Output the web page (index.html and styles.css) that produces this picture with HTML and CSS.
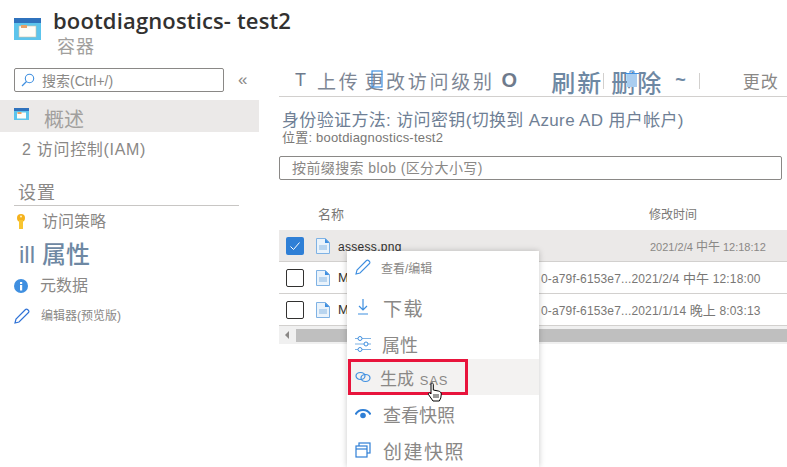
FILE: index.html
```html
<!DOCTYPE html>
<html lang="zh-CN">
<head>
    <meta charset="UTF-8">
    <meta name="viewport" content="width=device-width, initial-scale=1.0">
    <title>bootdiagnostics-test2</title>
    <link rel="stylesheet" href="styles.css">
</head>
<body>
    <header class="page-head">
        <svg class="head-icon" viewBox="0 0 27 22">
            <rect width="27" height="22" fill="#5cc4ec"/>
            <rect width="27" height="5" fill="#2f72bd"/>
            <rect x="5" y="8" width="17" height="11" fill="#fdfdf8" stroke="#c9c3a8" stroke-width=".6"/>
            <rect x="7" y="7" width="6" height="3" fill="#e8a268"/>
        </svg>
        <div>
            <h1>bootdiagnostics- test2</h1>
            <div class="subtitle">容器</div>
        </div>
    </header>

    <div class="main">
        <nav class="side">
            <div class="side-search-row">
                <div class="side-search">
                    <svg class="search-icon" viewBox="0 0 14 14">
                        <circle cx="8.5" cy="5.5" r="4.2" fill="none" stroke="#3f8fe0" stroke-width="1.1"/>
                        <path d="M5.5 8.5 1 13" stroke="#3f8fe0" stroke-width="1.3"/>
                    </svg>
                    <span>搜索(Ctrl+/)</span>
                </div>
                <span class="collapse">«</span>
            </div>
            <div class="side-overview">
                <svg class="overview-icon" viewBox="0 0 15 12">
                    <rect width="15" height="12" fill="#5cc4ec"/>
                    <rect width="15" height="3" fill="#2f72bd"/>
                    <rect x="3" y="4.5" width="9" height="6" fill="#fdfdf8"/>
                    <rect x="3.5" y="4" width="4" height="2" fill="#e8a268"/>
                </svg>
                <span>概述</span>
            </div>
            <div class="side-iam">2 访问控制(IAM)</div>
            <div class="side-section">设置</div>
            <div class="side-item side-policy">
                <svg class="key-icon" viewBox="0 0 10 16">
                    <circle cx="5" cy="4" r="4" fill="#f5b21d"/>
                    <rect x="3" y="6" width="4" height="9" fill="#f8c530"/>
                    <circle cx="5" cy="2.5" r="1" fill="#fff3c4"/>
                </svg>
                <span>访问策略</span>
            </div>
            <div class="side-props"><span class="props-ill">ill</span>属性</div>
            <div class="side-item side-meta">
                <svg class="info-icon" viewBox="0 0 14 14">
                    <circle cx="7" cy="7" r="7" fill="#3f8fe0"/>
                    <rect x="6" y="6" width="2.2" height="5.5" fill="#fff"/>
                    <rect x="6" y="3" width="2.2" height="2" fill="#fff"/>
                </svg>
                <span>元数据</span>
            </div>
            <div class="side-item side-editor">
                <svg class="pencil-icon" viewBox="0 0 16 16">
                    <path d="M1 15l1-4L11.500 1.500a1.400 1.400 0 0 1 2 0l1 1a1.400 1.400 0 0 1 0 2L5 14z" fill="none" stroke="#2f72d6" stroke-width="1.200"/>
                </svg>
                <span>编辑器(预览版)</span>
            </div>
        </nav>

        <section class="content">
            <div class="toolbar">
                <span class="tool-t">T</span>
                <span class="tool tool-upload">上传</span>
                <span class="tool tool-access">更改访问级别</span>
                <span class="tool-circle">O</span>
                <span class="tool-big tool-refresh">刷新</span>
                <span class="tool-sep"></span>
                <span class="tool-big tool-delete">删除</span>
                <span class="tool-tilde">~</span>
                <span class="tool-sep tool-sep-2"></span>
                <span class="tool-change">更改</span>
                <svg class="overlay-icon overlay-square" viewBox="0 0 12 18">
                    <rect x="1" y="1" width="10" height="16" fill="none" stroke="#3f8fe0" stroke-width="1.200"/>
                </svg>
                <svg class="overlay-icon overlay-trash" viewBox="0 0 14 18">
                    <rect x="2" y="4" width="10" height="13" fill="#a9cdf0"/>
                    <path d="M0 3.500h14M5 3V1h4v2" fill="none" stroke="#3f8fe0"/>
                </svg>
            </div>

            <div class="auth">身份验证方法: 访问密钥(切换到 Azure AD 用户帐户)</div>
            <div class="location">位置: bootdiagnostics-test2</div>
            <div class="blob-search">按前缀搜索 blob (区分大小写)</div>

            <div class="table-head">
                <span class="col-name">名称</span>
                <span class="col-time">修改时间</span>
            </div>
            <div class="row row-selected">
                <span class="check check-on">
                    <svg viewBox="0 0 18 18"><path d="M4.500 9.500l3 3 6-7" fill="none" stroke="#fff" stroke-width="1"/></svg>
                </span>
                <svg class="file-icon" viewBox="0 0 14 16"><path d="M.5.500h9l4 4v11H.5z" fill="#eaf3fb" stroke="#7fb2e4"/><path d="M9 .500v4.500h4.500z" fill="#3f8fe0"/><rect x="3" y="7" width="8" height="5" fill="#b9d5ef"/></svg>
                <span class="file-name file-name-cut">assess.png</span>
                <span class="row-time">2021/2/4 <span class="cjk">中午</span> 12:18:12</span>
            </div>
            <div class="row">
                <span class="check"></span>
                <svg class="file-icon" viewBox="0 0 14 16"><path d="M.5.500h9l4 4v11H.5z" fill="#eaf3fb" stroke="#7fb2e4"/><path d="M9 .500v4.500h4.500z" fill="#3f8fe0"/><rect x="3" y="7" width="8" height="5" fill="#b9d5ef"/></svg>
                <span class="file-name">M</span>
                <span class="row-guid">0-a79f-6153e7...2021/2/4 <span class="cjk">中午</span> 12:18:00</span>
            </div>
            <div class="row">
                <span class="check"></span>
                <svg class="file-icon" viewBox="0 0 14 16"><path d="M.5.500h9l4 4v11H.5z" fill="#eaf3fb" stroke="#7fb2e4"/><path d="M9 .500v4.500h4.500z" fill="#3f8fe0"/><rect x="3" y="7" width="8" height="5" fill="#b9d5ef"/></svg>
                <span class="file-name">M</span>
                <span class="row-guid">0-a79f-6153e7...2021/1/14 <span class="cjk">晚上</span> 8:03:13</span>
            </div>
            <div class="scrollbar">
                <span class="scroll-arrow"></span>
                <span class="scroll-thumb"></span>
            </div>
        </section>
    </div>

    <div class="menu">
        <div class="menu-item menu-edit">
            <svg class="menu-icon" viewBox="0 0 16 16"><path d="M1 15l1-4L11.500 1.500a1.400 1.400 0 0 1 2 0l1 1a1.400 1.400 0 0 1 0 2L5 14z" fill="none" stroke="#3f8fe0" stroke-width="1.100"/></svg>
            <span>查看/编辑</span>
        </div>
        <div class="menu-item menu-download">
            <svg class="menu-icon" viewBox="0 0 16 16"><path d="M8 0v10M4 7l4 4 4-4M3 15h10" fill="none" stroke="#3f8fe0" stroke-width="1.200"/></svg>
            <span>下载</span>
        </div>
        <div class="menu-item menu-props">
            <svg class="menu-icon" viewBox="0 0 16 16"><path d="M0 2.500h16M0 8h16M0 13.500h16" stroke="#7fb2e4" stroke-width="1.200"/><circle cx="5" cy="2.500" r="2" fill="#fff" stroke="#3f8fe0"/><circle cx="11" cy="8" r="2" fill="#fff" stroke="#3f8fe0"/><circle cx="5" cy="13.500" r="2" fill="#fff" stroke="#3f8fe0"/></svg>
            <span>属性</span>
        </div>
        <div class="menu-item menu-sas">
            <div class="sas-box">
                <svg class="menu-icon" viewBox="0 0 16 12"><ellipse cx="5.500" cy="5" rx="4.500" ry="3.500" fill="none" stroke="#3f8fe0" stroke-width="1.200"/><ellipse cx="10.500" cy="7" rx="4.500" ry="3.500" fill="none" stroke="#3f8fe0" stroke-width="1.200"/></svg>
                <span>生成 <small>SAS</small></span>
            </div>
        </div>
        <div class="menu-item menu-view">
            <svg class="menu-icon" viewBox="0 0 16 12"><path d="M.5 6.500a8.500 8.500 0 0 1 15 0" fill="none" stroke="#2f7fd6" stroke-width="2"/><circle cx="8" cy="7.500" r="2.800" fill="#2f7fd6"/></svg>
            <span>查看快照</span>
        </div>
        <div class="menu-item menu-create">
            <svg class="menu-icon" viewBox="0 0 16 16"><rect x="4" y="1" width="11" height="10" fill="none" stroke="#2f7fd6" stroke-width="1.200"/><rect x="1" y="4" width="11" height="11" fill="#fff" stroke="#2f7fd6" stroke-width="1.200"/><path d="M1 7h11M4 1v0" stroke="#2f7fd6" stroke-width="1.200"/></svg>
            <span>创建快照</span>
        </div>
    </div>

    <svg class="hand-cursor" viewBox="0 0 16 20">
        <path d="M4 1.500c1-1 2.300-.5 2.300 1V8l5 1c2 .5 3 1.500 3 3l-.5 4-1.500 3H6L1.500 12.500c-.5-1 .5-2 1.500-1.500l1 1z" fill="#fff" stroke="#000" stroke-width="1"/>
        <path d="M7 12v4M9 12v4M11 12v4" stroke="#000" stroke-width=".8"/>
    </svg>
</body>
</html>
```

FILE: styles.css
```css
* {
    box-sizing: border-box;
}
html, body {
    margin: 0;
    height: 467px;
    overflow: hidden;
}
body {
    position: relative;
    background: #fff;
    color: #8a8886;
    font-family: 'Liberation Sans', 'Noto Sans CJK SC', sans-serif;
}
.page-head {
    display: flex;
    height: 65px;
    padding: 5px 0 0 14px;
}
.head-icon {
    width: 27px;
    height: 22px;
    margin: 13px 12px 0 0;
}
h1 {
    margin: 0;
    font-family: 'Open Sans', 'Noto Sans CJK SC', sans-serif;
    font-size: 22px;
    font-weight: 600;
    line-height: 30px;
    letter-spacing: .15px;
    color: #323130;
}
.subtitle {
    margin: 1px 0 0 4px;
    font-size: 18px;
    line-height: 22px;
    letter-spacing: 1px;
    color: #a19f9d;
}
.main {
    display: flex;
}
.side {
    width: 259px;
    flex: none;
}
.side-search-row {
    display: flex;
    align-items: center;
    padding: 3px 0 0 14px;
}
.side-search {
    display: flex;
    align-items: center;
    width: 210px;
    height: 24px;
    padding-left: 6px;
    border: 1px solid #8a8886;
    border-radius: 2px;
    font-size: 14px;
}
.search-icon {
    width: 14px;
    height: 14px;
    margin-right: 7px;
}
.collapse {
    margin-left: 14px;
    font-size: 17px;
    color: #8a8886;
}
.side-overview {
    display: flex;
    align-items: center;
    height: 32px;
    margin-top: 8px;
    padding-left: 14px;
    background: #ebe9e8;
    font-size: 20px;
    color: #a19f9d;
}
.overview-icon {
    width: 15px;
    height: 12px;
    margin: -4px 15px 0 0;
}
.side-overview span {
    margin-top: 4px;
}
.side-iam {
    margin: 8px 0 0 22px;
    font-size: 16px;
    line-height: 20px;
    letter-spacing: .7px;
}
.side-section {
    margin: 22px 20px 0 14px;
    padding: 0 0 0 4px;
    width: 225px;
    height: 24px;
    border-bottom: 1px solid #c8c6c4;
    font-size: 18px;
    line-height: 22px;
    letter-spacing: 1px;
}
.side-item {
    display: flex;
    align-items: center;
}
.side-policy {
    margin: 6px 0 0 16px;
    font-size: 16px;
    line-height: 20px;
}
.key-icon {
    width: 10px;
    height: 16px;
    margin-right: 16px;
}
.side-props {
    display: flex;
    margin: 8px 0 0 19px;
    font-size: 24px;
    line-height: 30px;
    font-weight: 500;
    color: #6e88a3;
}
.props-ill {
    width: 23px;
    font-weight: 400;
}
.side-meta {
    margin: 6px 0 0 14px;
    font-size: 16px;
    line-height: 20px;
}
.info-icon {
    width: 14px;
    height: 14px;
    margin-right: 12px;
}
.side-editor {
    margin: 10px 0 0 14px;
    font-size: 12px;
    line-height: 20px;
}
.pencil-icon {
    width: 16px;
    height: 16px;
    margin-right: 11px;
}
.content {
    flex: 1;
    margin-left: 20px;
}
.toolbar {
    position: relative;
    display: flex;
    align-items: center;
    height: 32px;
    border-bottom: 1px solid #d2d0ce;
    color: #7d8694;
}
.tool-t {
    margin-left: 16px;
    font-size: 18px;
    color: #6e7a8c;
}
.tool {
    font-size: 19px;
    letter-spacing: 2.700px;
    white-space: nowrap;
}
.tool-big {
    font-size: 24px;
    font-weight: 500;
    color: #6e88a3;
    letter-spacing: 2px;
    line-height: 32px;
    margin-top: 6px;
    white-space: nowrap;
}
.tool-upload {
    margin-left: 11px;
}
.tool-access {
    margin-left: 4px;
}
.tool-circle {
    margin-left: 7px;
    font-size: 20px;
    font-weight: 700;
    color: #6e7a8c;
}
.tool-refresh {
    margin-left: 34px;
}
.tool-sep {
    width: 1px;
    height: 16px;
    background: #d2d0ce;
}
.tool-delete {
    margin-left: 7px;
}
.tool-tilde {
    margin-left: 12px;
    font-size: 18px;
    font-weight: 700;
    color: #6e88a3;
}
.tool-sep-2 {
    margin-left: 13px;
}
.tool-change {
    margin-left: 43px;
    font-size: 17px;
    letter-spacing: 1px;
    color: #8a8886;
}
.overlay-icon {
    position: absolute;
}
.overlay-square {
    left: 92px;
    top: 5px;
    width: 12px;
    height: 18px;
}
.overlay-trash {
    left: 346px;
    top: 5px;
    width: 14px;
    height: 18px;
}
.auth {
    margin: 14px 0 0 3px;
    font-size: 17px;
    line-height: 20px;
    letter-spacing: .35px;
    color: #6f7f95;
    white-space: nowrap;
}
.location {
    margin-left: 3px;
    font-size: 13px;
    line-height: 14px;
    letter-spacing: .2px;
    color: #797775;
}
.blob-search {
    width: 503px;
    height: 24px;
    margin-top: 11px;
    padding-left: 12px;
    border: 1px solid #8a8886;
    border-radius: 2px;
    font-size: 14px;
    line-height: 22px;
    letter-spacing: .4px;
}
.table-head {
    display: flex;
    align-items: center;
    height: 50px;
    padding: 16px 0 0 39px;
    color: #797775;
}
.col-name {
    width: 331px;
    font-size: 13px;
}
.col-time {
    font-size: 12px;
}
.row {
    display: flex;
    align-items: center;
    height: 32px;
    border-bottom: 1px solid #d2d0ce;
    padding-left: 7px;
    font-size: 13px;
}
.row-selected {
    background: #ebe9e8;
}
.check {
    width: 18px;
    height: 18px;
    flex: none;
    border: 1px solid #323130;
    border-radius: 2px;
    background: #fff;
}
.check-on {
    border: none;
    background: #2f7fd6;
}
.check svg {
    display: block;
}
.file-icon {
    width: 14px;
    height: 16px;
    margin-left: 12px;
}
.file-name {
    margin-left: 8px;
    color: #323130;
}
.file-name-cut {
    margin-top: 3px;
    font-size: 12px;
    letter-spacing: .3px;
}
.row-time {
    position: absolute;
    left: 650px;
    font-size: 11px;
    color: #8a8886;
    white-space: nowrap;
}
.row-time .cjk {
    font-size: 12px;
}
.row-guid {
    position: absolute;
    left: 541px;
    font-size: 12px;
    color: #797775;
    letter-spacing: .15px;
    white-space: nowrap;
}
.row-guid .cjk {
    font-size: 13px;
}
.scrollbar {
    display: flex;
    align-items: center;
    height: 18px;
    background: #f0f0f0;
}
.scroll-arrow {
    width: 0;
    height: 0;
    margin-left: 6px;
    border: 4px solid transparent;
    border-right-color: #8a8886;
    border-left: none;
}
.scroll-thumb {
    flex: 1;
    height: 13px;
    margin-left: 7px;
    background: #bfbfbf;
}
.menu {
    position: absolute;
    left: 347px;
    top: 251px;
    width: 192px;
    height: 216px;
    background: #fff;
    box-shadow: 0 0 6px rgba(0, 0, 0, .22);
}
.menu-item {
    display: flex;
    align-items: center;
    padding-left: 8px;
    color: #8a8886;
    white-space: nowrap;
}
.menu-icon {
    width: 16px;
    flex: none;
}
.menu-edit {
    height: 32px;
    font-size: 12px;
}
.menu-edit .menu-icon {
    height: 16px;
    margin-right: 10px;
}
.menu-download {
    height: 46px;
    margin-top: 1px;
    font-size: 19px;
    letter-spacing: 1.500px;
}
.menu-download .menu-icon {
    height: 16px;
    margin-right: 12px;
}
.menu-props {
    height: 28px;
    font-size: 18px;
}
.menu-props .menu-icon {
    height: 16px;
    margin-right: 11px;
}
.menu-sas {
    height: 36px;
    margin-top: 1px;
    padding-left: 1px;
    background: #f3f2f1;
    font-size: 17px;
}
.sas-box {
    display: flex;
    align-items: center;
    width: 120px;
    height: 36px;
    padding-left: 4px;
    border: 3px solid #e8143c;
}
.sas-box .menu-icon {
    height: 12px;
    margin-right: 9px;
}
.sas-box small {
    margin-left: 1px;
    font-size: 13px;
    letter-spacing: .8px;
}
.menu-view {
    height: 38px;
    font-size: 18px;
}
.menu-view .menu-icon {
    height: 12px;
    margin-right: 12px;
}
.menu-create {
    height: 34px;
    font-size: 19px;
    letter-spacing: 1.500px;
}
.menu-create .menu-icon {
    height: 16px;
    margin-right: 12px;
}
.hand-cursor {
    position: absolute;
    left: 427px;
    top: 382px;
    width: 16px;
    height: 20px;
}
```
